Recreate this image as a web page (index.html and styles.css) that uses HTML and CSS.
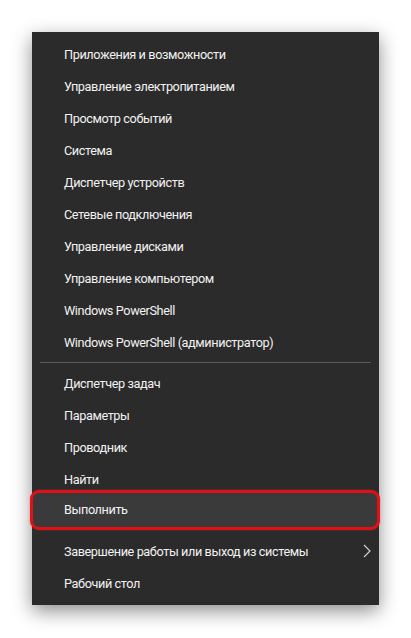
FILE: index.html
```html
<!DOCTYPE html>
<html lang="ru">
<head>
<meta charset="utf-8">
<link rel="stylesheet" href="styles.css">
</head>
<body>
<div class="menu">
  <div class="group">
    <div class="item">Приложения и возможности</div>
    <div class="item">Управление электропитанием</div>
    <div class="item">Просмотр событий</div>
    <div class="item">Система</div>
    <div class="item">Диспетчер устройств</div>
    <div class="item">Сетевые подключения</div>
    <div class="item">Управление дисками</div>
    <div class="item">Управление компьютером</div>
    <div class="item">Windows PowerShell</div>
    <div class="item">Windows PowerShell (администратор)</div>
  </div>
  <div class="sep"></div>
  <div class="group">
    <div class="item">Диспетчер задач</div>
    <div class="item">Параметры</div>
    <div class="item">Проводник</div>
    <div class="item">Найти</div>
    <div class="item active">Выполнить</div>
    <div class="item sub">Завершение работы или выход из системы
      <svg class="chev" width="8" height="14" viewBox="0 0 8 14"><path d="M1 1 L7 7 L1 13" fill="none" stroke="#cfcfcf" stroke-width="1.2"/></svg>
    </div>
    <div class="item">Рабочий стол</div>
  </div>
</div>
</body>
</html>
```
FILE: styles.css
```css
html, body {
  margin: 0;
  padding: 0;
  background: #ffffff;
}
body {
  width: 411px;
  height: 638px;
  padding: 32px 0 0 32px;
  box-sizing: border-box;
  font-family: Roboto, "Noto Sans", sans-serif;
}
.menu {
  width: 347px;
  background: #2b2b2b;
  padding: 6px 0;
  box-shadow: 0 6px 18px rgba(0, 0, 0, 0.45);
  box-sizing: border-box;
}
.group {
  display: flex;
  flex-direction: column;
}
.item {
  height: 32px;
  display: flex;
  align-items: center;
  padding-left: 32px;
  color: #f2f2f2;
  font-size: 12.7px;
  letter-spacing: -0.4px;
  position: relative;
}
.sep {
  height: 1px;
  background: #5c5c5c;
  margin: 4px 8px 4px 8px;
}
.item.active {
  height: 40px;
  margin: -5px -1px 5px -2px;
  padding-left: 31px;
  padding-bottom: 1px;
  background: #3a3a3a;
  border: 3px solid #e0101a;
  border-radius: 9px;
  box-sizing: border-box;
  box-shadow: 0 0 2px rgba(255, 40, 40, 0.5);
}
.chev {
  position: absolute;
  right: 8px;
  top: 9px;
}
```
